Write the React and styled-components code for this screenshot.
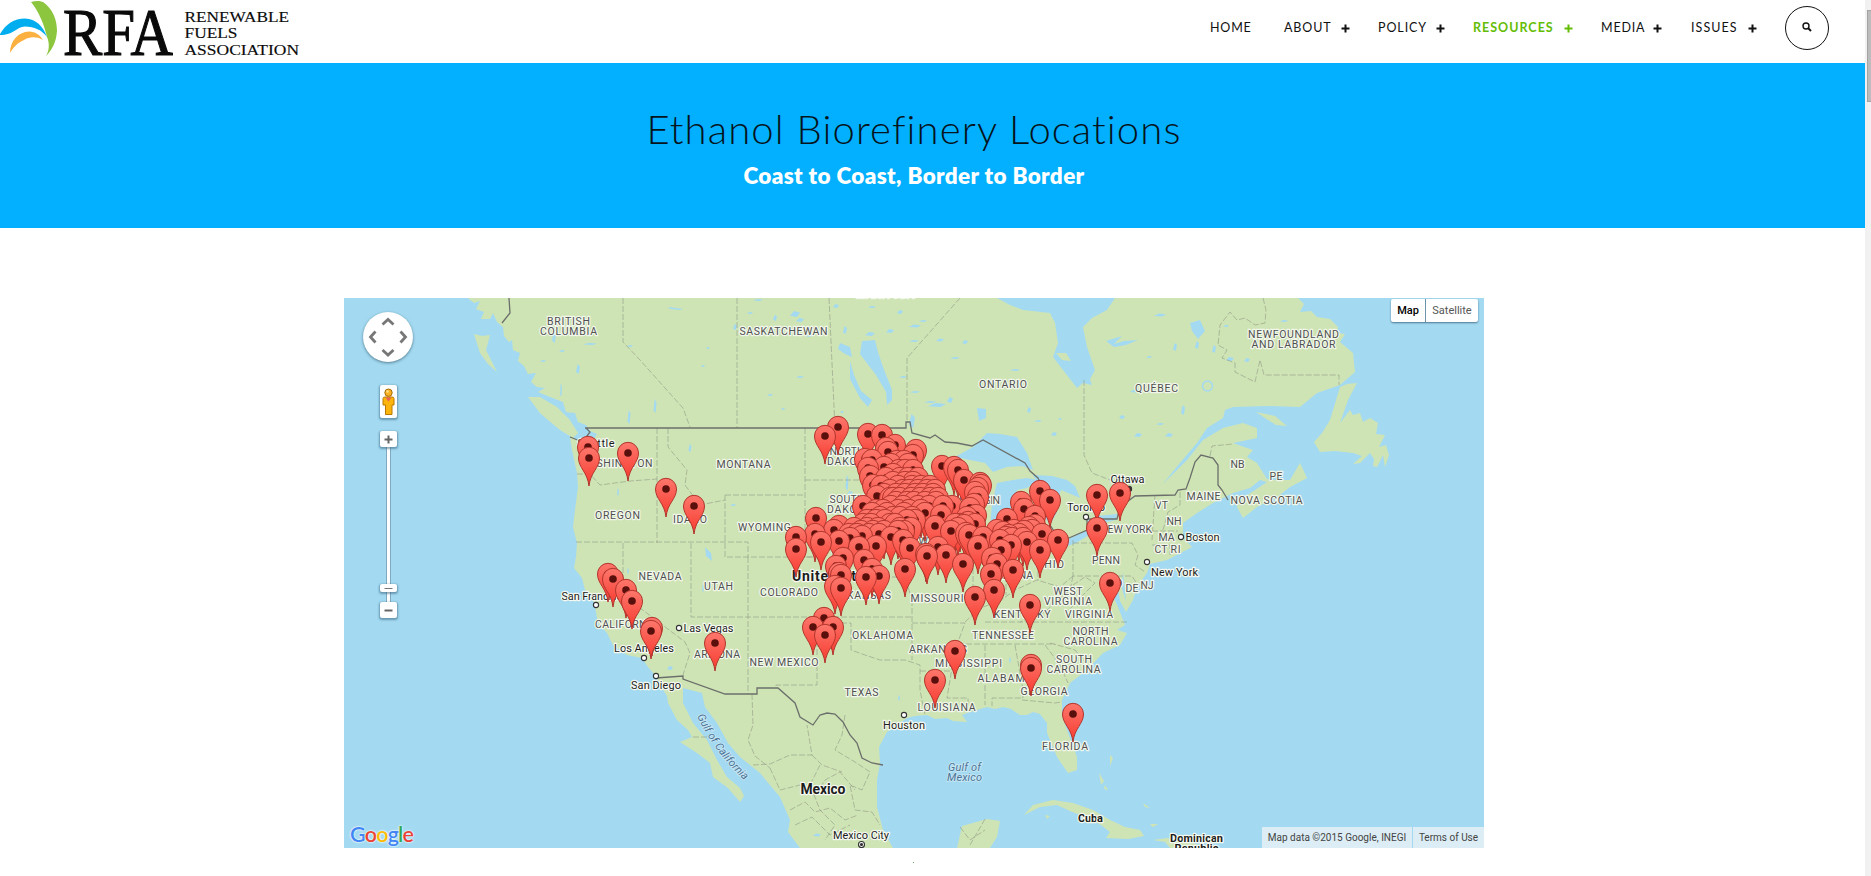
import React from "react";
import styled, { createGlobalStyle } from "styled-components";

const GlobalStyle = createGlobalStyle`
  body { margin: 0; background: #fff; font-family: Lato, "Open Sans", sans-serif; overflow: hidden; }
  * { box-sizing: border-box; }
`;

const Screen = styled.div`
  display: flex;
  width: 1871px;
  height: 876px;
  overflow: hidden;
`;
const Page = styled.div`
  width: 1865px;
  height: 876px;
  display: flex;
  flex-direction: column;
`;
const ScrollTrack = styled.div`
  width: 6px;
  height: 876px;
  padding: 10px 0 0 2px;
  background: #f1f1f1;
`;
const ScrollThumb = styled.div`
  height: 92px;
  background: #bcbcbc;
  border: 1px solid #a3a3a3;
  border-right: 0;
`;
const Header = styled.header`
  display: flex;
  height: 63px;
  justify-content: space-between;
  background: #fff;
`;
const Logo = styled.svg`
  width: 310px;
  height: 63px;
  display: block;
`;
const Nav = styled.nav`
  display: flex;
  align-items: center;
  height: 56px;
  padding-right: 36px;
`;
const NavItem = styled.a`
  display: flex;
  align-items: center;
  width: ${(p) => p.$w}px;
  color: ${(p) => (p.$active ? "#64bd05" : "#111")};
  font-size: 12.5px;
  font-weight: ${(p) => (p.$active ? 700 : 400)};
  line-height: 16px;
  text-decoration: none;
`;
const NavLabel = styled.span`
  width: ${(p) => p.$w}px;
  letter-spacing: ${(p) => p.$ls}px;
  white-space: nowrap;
`;
const Plus = styled.svg`
  width: 9px;
  height: 9px;
  display: block;
`;
const SearchButton = styled.button`
  display: flex;
  align-items: center;
  justify-content: center;
  width: 44px;
  height: 44px;
  padding: 0 0 2px;
  border: 1px solid #111;
  border-radius: 50%;
  background: #fff;
`;
const Hero = styled.section`
  height: 165px;
  padding: 39px 37px 0 0;
  background: #02b0ff;
  text-align: center;
`;
const Title = styled.h1`
  margin: 0;
  font-size: 40px;
  line-height: 54px;
  font-weight: 300;
  letter-spacing: 1.1px;
  color: #06141c;
`;
const Subtitle = styled.h2`
  margin: 8px 0 0;
  font-size: 22.5px;
  line-height: 24px;
  font-weight: 800;
  letter-spacing: 0.35px;
  color: #fff;
`;
const MapBox = styled.main`
  position: relative;
  width: 1140px;
  height: 550px;
  margin: 70px 0 0 344px;
  background: #a3daf1;
  overflow: hidden;
  font-family: Roboto, sans-serif;
`;
const MapCanvas = styled.svg`
  display: block;
  width: 1140px;
  height: 550px;
`;
const Controls = styled.div`
  position: absolute;
  left: 19px;
  top: 14px;
  width: 50px;
  display: flex;
  flex-direction: column;
  align-items: center;
`;
const PanWheel = styled.svg`
  width: 50px;
  height: 50px;
  border-radius: 50%;
  background: #fff;
  box-shadow: 0 1px 3px rgba(30, 60, 80, 0.6);
`;
const ControlButton = styled.div`
  display: flex;
  align-items: center;
  justify-content: center;
  width: 17px;
  height: ${(p) => p.$h}px;
  margin-top: ${(p) => p.$mt || 0}px;
  background: #fff;
  border-radius: 2px;
  box-shadow: 0 1px 2px 1px rgba(50, 90, 120, 0.5);
  z-index: 1;
`;
const Track = styled.div`
  width: 5px;
  height: ${(p) => p.$h}px;
  background: #fff;
  border: solid #7fa9bf;
  border-width: 0 1px;
`;
const TypeSwitch = styled.div`
  position: absolute;
  right: 6px;
  top: 1px;
  display: flex;
  height: 23px;
  background: #fff;
  border-radius: 2px;
  box-shadow: 0 1px 2px rgba(20, 50, 80, 0.6);
  font-size: 11px;
`;
const TypeOption = styled.div`
  width: ${(p) => p.$w}px;
  line-height: 23px;
  text-align: center;
  color: ${(p) => (p.$on ? "#000" : "#565656")};
  font-weight: ${(p) => (p.$on ? 500 : 400)};
  border-left: ${(p) => (p.$on ? "0" : "1px solid #6b93aa")};
`;
const Legal = styled.div`
  position: absolute;
  right: 0;
  bottom: 0;
  display: flex;
  gap: 1px;
`;
const LegalItem = styled.span`
  width: ${(p) => p.$w}px;
  height: 21px;
  line-height: 21px;
  text-align: center;
  white-space: nowrap;
  font-size: 10px;
  letter-spacing: ${(p) => p.$ls}px;
  color: #444;
  background: #dcedf5;
`;
const GoogleMark = styled.div`
  position: absolute;
  left: 6px;
  bottom: 1px;
  font: 600 21.5px/26px Lato, "Open Sans", sans-serif;
  letter-spacing: -0.8px;
  text-shadow: 0 0 2px #fff, 0 0 2px #fff;
`;
const Letter = styled.span`
  color: ${(p) => p.$c};
`;
const Speck = styled.div`
  width: 1px;
  height: 1px;
  margin: 14px 0 0 913px;
  background: #5fae5f;
`;

const LAND = [
  "M468 298 L474 303 480 301 476 309 484 312 481 319 490 319 493 313 497 322 503 327 504 336 509 342 512 340 513 350 520 353 518 361 524 366 528 374 536 373 531 382 537 387 545 388 538 392 550 397 563 402 566 412 575 413 578 422 586 425 590 431 597 434 592 442 587 448 582 441 570 437 572 450 577 473 578 487 575 510 573 527 577 543 576 557 574 568 582 578 585 590 592 595 595 607 598 623 607 633 613 645 627 655 642 658 648 667 655 675 662 688 667 696 668 703 677 720 688 730 692 737 680 742 697 753 710 763 713 777 728 788 740 802 744 796 740 788 727 777 717 760 707 740 693 723 683 703 683 688 702 693 705 707 717 723 728 743 740 757 760 773 780 797 790 820 788 832 800 848 893 848 883 830 877 807 877 780 880 763 879 747 887 732 893 728 907 718 915 716 927 715 935 719 947 718 953 721 967 722 962 715 970 712 987 707 995 709 1003 707 1011 709 1020 715 1027 715 1033 712 1040 714 1047 723 1047 733 1050 740 1057 757 1068 773 1077 770 1077 757 1068 733 1062 715 1062 700 1070 683 1087 670 1103 653 1120 645 1127 633 1117 630 1125 625 1118 607 1110 590 1118 588 1120 601 1126 612 1133 600 1137 587 1147 573 1150 564 1167 560 1192 547 1183 538 1183 523 1197 513 1213 503 1233 493 1250 488 1260 480 1267 482 1240 500 1237 507 1243 518 1257 507 1277 497 1290 487 1307 478 1300 463 1290 480 1275 480 1267 479 1257 463 1247 457 1253 450 1244 447 1233 443 1257 438 1257 428 1243 423 1223 428 1203 440 1187 460 1162 485 1180 463 1197 443 1207 428 1223 418 1225 410 1233 407 1267 406 1300 407 1317 393 1340 385 1355 372 1353 353 1340 342 1345 334 1337 333 1338 327 1330 319 1317 317 1311 311 1300 312 1304 304 1298 298Z",
  "M528 397 L540 397 557 407 570 420 578 433 573 438 560 430 548 420 540 413Z",
  "M474 334 L482 336 490 335 486 350 492 362 497 372 488 364 480 353Z",
  "M1357 383 L1347 384 1340 387 1330 420 1322 433 1314 442 1320 452 1335 451 1353 453 1362 456 1353 464 1360 463 1370 453 1374 459 1373 466 1377 467 1383 455 1385 467 1389 455 1386 445 1379 447 1385 435 1376 434 1378 423 1370 418 1363 422 1360 413 1353 415 1350 410 1340 423 1348 400Z",
  "M1256 412 L1275 416 1287 426 1276 425Z",
  "M1024 815 L1033 805 1053 800 1073 803 1093 810 1110 820 1125 827 1140 830 1144 836 1128 839 1106 838 1110 832 1101 825 1085 817 1070 811 1057 805 1040 807Z",
  "M1045 815 L1050 816 1047 819Z",
  "M1153 840 L1167 838 1190 842 1207 848 1170 848 1165 842Z",
  "M957 848 L962 826 987 819 1000 821 997 837 990 848Z",
  "M1099 773 L1104 781 1101 785Z M1105 785 L1108 790 1104 789Z M1110 755 L1113 758 1110 766Z M1143 803 L1150 808 1145 807Z M1150 824 L1158 824 1153 827Z M1169 814 L1175 817Z",
];
const WATER = [
  "M997 298 L1010 305 1023 310 1050 313 1055 323 1058 343 1053 357 1063 370 1077 388 1083 383 1092 385 1090 379 1095 370 1087 347 1083 327 1092 318 1107 310 1115 298Z",
  "M862 341 L875 340 878 352 883 367 892 390 892 400 887 405 886 392 876 375 866 362 860 354Z",
  "M840 343 L850 347 852 357 845 354 838 349Z M850 361 L854 375 861 391 872 400 868 407 860 398 850 379Z",
  "M955 457 L973 447 987 433 1000 434 1017 437 1027 453 1033 470 1022 466 1007 467 993 472 985 463 970 460Z",
  "M997 483 L1013 480 1027 478 1038 480 1027 488 1017 490 1015 500 1010 512 1008 530 995 537 990 527 992 503Z",
  "M1033 475 L1052 476 1067 480 1075 486 1080 498 1073 495 1061 490 1058 500 1057 512 1050 525 1045 518 1045 500 1040 487Z",
  "M1087 520 L1098 516 1117 514 1116 520 1102 523 1089 523Z",
  "M1045 551 L1066 540 1090 529 1094 532 1076 543 1060 549Z",
  "M977 408 L986 409 986 418 979 421Z",
  "M705 547 L711 553 712 561 706 556Z",
  "M1190 323 L1200 320 1205 331 1198 339 1192 331Z",
  "M1106 341 L1122 336 1114 344 1124 341 1138 340 1126 345 1114 347Z",
  "M668 307 L683 309 680 310 670 309Z",
  "M1123 573 L1121 585 1126 602 1125 590Z",
];
const PONDS = [
  [795,314,5,3],[800,320,4,2],[775,318,2,3],[809,336,3,1],[750,313,3,1],[758,300,5,1],[836,306,3,2],[872,307,4,1],[900,312,3,2],[915,326,6,1.5],[923,321,4,1],[890,331,4,2],[845,330,2,4],[870,334,5,2],[914,341,5,1],[940,340,4,1.5],[965,342,3,2],[903,377,4,1],[915,392,5,1],[930,402,6,1],[937,405,9,2],[950,400,3,3],[800,377,4,1],[770,395,3,1],[783,409,2,1],[842,412,2,1],[1015,370,5,1],[955,358,5,1],[1029,410,2,3],[1038,421,4,1],[1060,419,2,1],[1054,434,3,2],[912,421,3,7],[1135,391,5,1.5],[1160,315,6,1.5],[1175,347,2,4],[1149,357,3,1],[1197,345,2,4],[1183,410,2,5],[1138,435,4,2],[1169,435,4,2],[1122,417,3,2],[1160,424,4,1],[1214,349,2,4],[1230,359,4,2],[1247,360,3,2],[1226,326,3,1],[1284,321,4,1],[735,327,2,3],[708,348,2,1],[703,366,2,1],[630,346,3,1],[554,337,2,6],[562,351,3,1],[578,369,2,5],[561,390,1,7],[629,417,1.5,7],[655,406,1.5,7],[590,344,7,1],[543,361,3,1],[690,448,1.5,4],[618,492,1,4],[733,505,3,1],[847,483,1.5,8],[850,493,3,2],[670,668,3,2],[817,835,4,1.5],[899,698,1,3],[628,571,1,3],[703,588,1,4],[900,638,3,1],[1010,660,1,3],
];
const STATE_LINES =
  "M623 298V342L640 360 665 388 683 408 690 427 M737 298V428 M829 298L835 428 M960 298L907 358V420 M657 428V543 M668 428V447L687 470 685 485 700 505 725 500 M725 495V557H820 M725 495H805 M805 428V557 M805 480H870 M577 474H590L600 485 630 481 657 479 M576 542H748V557 M623 543V595L685 642 690 653 683 675 M691 543V617H912 M748 557V694 M817 617V685H776V688 M817 623H851V650L865 655 880 660 905 660 920 665V690L925 715 M912 600V660 M920 671H952 M912 623H965L955 650 950 680 947 698H968V706 M985 645V705 M1015 645L1023 690V698H992V706 M958 644H1055 M985 622H1127 M1022 700L1055 703 1062 702 M1045 645L1060 665 1068 683 M1050 643L1075 650 1090 668 M1073 540V576H1132L1137 584 M1073 543H1132L1138 555 1135 565 1145 572 M1073 576L1070 590 1058 600 1045 612 1020 622 M1073 585L1085 577 1095 583 1080 598 1070 609 M965 622L980 608 1000 601 1015 590 1037 580 1050 584 1060 587 1073 576 M973 560V600 M1006 560V595 M1038 555V580 M820 557H805 M820 577H905L912 600 M1084 380V455L1092 473 1110 480 1125 490 M1263 298L1266 310 1265 323 1255 325 1245 318 1237 320 1230 312 1220 325 1218 345 1227 350 1222 358 1235 363 1235 372 1255 382 1260 360 1264 375H1339V385 M1155 495L1152 540 M1180 492V505L1168 512 1163 530 M1152 531H1178 M1152 545H1170V555 M1210 456L1212 446 1233 444 M752 694L753 725 748 740 755 756 770 768 M753 765L770 764 790 755 812 755 807 725 M812 755L822 765 842 772 M845 715L842 735 835 750 855 762 870 772 862 790 850 785 855 810 872 812 880 825 M770 768L780 790 800 785 815 795 825 780 840 772 855 790 M790 810L805 802 815 812 830 808 845 820 858 815 M795 825L812 817 830 835 850 825 M820 765L810 785 820 810 835 825 825 840 M985 819L970 845 M693 737H707 M960 827L970 840 985 830";
const NATION_LINES =
  "M585 428H906V422H910L912 433 930 438 935 435 945 442 957 443 972 446 983 440 1025 463 1030 471 1038 478 1048 500 1050 525 1060 540 1069 538 1087 530V519H1117L1120 507 1135 496 1175 495 1178 490 1186 489 1190 478 1195 462 1201 455 1213 458 1218 465V485L1222 490 1228 500 M586 428L590 432 584 440 M570 437L580 441 M656 678L683 676V679L725 694H757V688H778L795 703 800 717 813 725 820 715 827 713 835 714 843 722 850 735 857 743 862 758 872 763 883 765 M509 298L510 313 502 323";

/* text, centre x, baseline, width */
const REGIONS = [
  ["BRITISH",568.5,325,43],["COLUMBIA",568.5,335,57],["SASKATCHEWAN",783.5,335,88],["MANITOBA",885,298,58],["ONTARIO",1003,388,48],["QUÉBEC",1156.5,392,43],
  ["NEWFOUNDLAND",1293.5,338,91],["AND LABRADOR",1293.5,348,84],["WASHINGTON",616,467,73],["MONTANA",743.5,468,54],["NORTH",847,455,35],["DAKOTA",849,465,44],
  ["OREGON",617.5,519,45],["IDAHO",690,523,34],["SOUTH",847,503,35],["DAKOTA",849,513,44],["WYOMING",764.5,531,53],["NEVADA",660,580,43],["UTAH",718.5,590,29],
  ["CALIFORNIA",626,628,62],["ARIZONA",717,658,46],["COLORADO",789,596,58],["KANSAS",869,599,44],["NEW MEXICO",784,666,69],["OKLAHOMA",882.5,639,61],
  ["TEXAS",861.5,696,34],["MISSOURI",937,602,53],["ARKANSAS",938,653,58],["MISSISSIPPI",968.5,667,67],["LOUISIANA",946.5,711,58],["ALABAMA",1005,682,55],
  ["TENNESSEE",1003,639,62],["KENTUCKY",1022,618,57],["GEORGIA",1044,695,47],["FLORIDA",1065,750,46],["WEST",1068,595,29],["VIRGINIA",1068,605,48],["VIRGINIA",1089,618,48],
  ["NORTH",1090.5,635,36],["CAROLINA",1090.5,645,54],["SOUTH",1074,663,36],["CAROLINA",1073.5,673,54],["INDIANA",1013,579,40],["OHIO",1050,568,28],["PENN",1106,564,28],
  ["NEW YORK",1126,533,52],["VT",1161.5,509,13],["NH",1174,525,15],["MA",1166.5,541,16],["CT",1161,553,13],["RI",1175.5,553,10],["MAINE",1203.5,500,34],["NB",1237.5,468,14],
  ["PE",1276,480,13],["NOVA SCOTIA",1266.5,504,72],["MD",1115,587,15],["DE",1132,592,13],["NJ",1147,589,13],["WISCONSIN",974,504,52],["NEBRASKA",860,553,56],["IOWA",921,545,28],
];
const CITIES = [
  ["Seattle",596,447,37],["San Francisco",595,600,67],["Los Angeles",644,652,60],["San Diego",656,689,50],["Las Vegas",708.5,632,50],["Houston",904,729,42],["Mexico City",861,839,56],
  ["Toronto",1086,511,38],["Ottawa",1127.5,483,34],["Boston",1202.5,541,34],["New York",1174.5,576,47],
];
const TOWNS = [[596,605],[644,658],[656,676],[679,628],[904,715],[1086,517],[1181,537],[1147,562]];

const SPREAD = {
  461:[897,904],464:[891,908],470:[899,905,913],474:[893],478:[886,900,908,918],482:[893,905,913],486:[881,898,912,921,930],490:[890,903,909,918,927,935],
  494:[884,896,905,915,923,933],498:[890,893,900,911,920,930,938],502:[896,907,914,925,936],506:[891,903,918,929,943],510:[876,883,898,909,921],
  513:[872,887,904],517:[880,893,900,912],520:[867,876,885,907],524:[863,871,890,895,960,955,975],528:[854,867,878,900,911,958],531:[861,873,884,898],534:[849,857,869,879],
};
const SINGLE = [
  [588,447],[589,458],[628,453],[666,489],[694,506],[608,574],[613,579],[626,590],[632,601],[652,628],[651,631],[715,643],
  [905,569],[926,554],[927,556],[946,555],[963,564],[997,564],[991,574],[1013,570],[994,590],[975,597],[1030,605],[1110,583],[955,651],[1031,665],[1031,668],[935,680],[1073,714],
  [824,618],[813,627],[833,627],[825,635],[796,549],[821,542],[839,541],[859,547],[876,546],[843,558],[836,566],[864,560],[839,573],[841,575],[835,586],[841,588],[872,569],[866,577],[879,576],
  [910,548],[1040,550],[978,546],[1001,550],[1011,545],[1027,542],[1058,540],[938,547],[992,558],[838,427],[825,436],[868,434],[882,435],[895,445],[886,448],[888,452],[916,450],[913,455],
  [865,459],[872,460],[868,468],[884,467],[870,476],[873,485],[877,496],[863,506],[942,466],[954,467],[958,470],[964,480],[980,483],[978,488],[975,492],[978,497],[974,504],[981,485],
  [952,506],[941,515],[935,526],[951,531],[925,513],[816,518],[815,534],[796,537],[834,530],[839,526],[862,536],[891,537],[903,540],[969,535],[983,537],[966,533],[1042,534],
  [1007,519],[1021,502],[1024,509],[1040,491],[1050,500],[1035,516],[1097,495],[1120,493],[1097,528],[976,515],[964,525],[967,517],[915,520],[904,531],[1000,540],[970,508],
  [997,530],[1003,532],[1009,535],[1014,530],[1019,534],[1024,531],[1029,527],[1035,525],[1032,530],[1012,538],[1006,537],[1023,538],[850,538],[968,522],
];
const PINS = [...SINGLE, ...Object.entries(SPREAD).flatMap(([y, xs]) => xs.map((x) => [x, +y]))].sort((a, b) => a[1] - b[1]);

const NAV = [
  { label: "HOME", w: 74, slot: 57, ls: 0.8, leaf: true },
  { label: "ABOUT", w: 94, slot: 57, ls: 0.9 },
  { label: "POLICY", w: 95, slot: 58, ls: 0.9 },
  { label: "RESOURCES", w: 128, slot: 91, ls: 1, active: true },
  { label: "MEDIA", w: 90, slot: 52, ls: 0.8 },
  { label: "ISSUES", w: 94, slot: 57, ls: 1.05 },
];

function BrandLogo() {
  return (
    <Logo viewBox="0 0 310 63" role="img">
      <path d="M31 2C35 .5 40 .5 43 2C53 9 57 20 57 31C56 43 52 50 46 56C49 51 50 44 47 37C44 24 39 12 31 2Z" fill="#8cc63f" />
      <path d="M0 34C6 24 14 18.500 25 18.500C36 19 43 26 47 37C42 30 34 26.500 25 26.500C16 27 14 35 0 35Z" fill="#00aeef" />
      <path d="M10 53C10 41 18 32 29 31.500C35 31.500 40 35 43 40C36 36 29 37 24 40C17 43 14 47 10 53Z" fill="#fbb040" />
      <g fontFamily="'Liberation Serif', serif" fill="#0a0a0a" stroke="#0a0a0a">
        <text x="63" y="54.5" fontSize="68" strokeWidth="1.2" textLength="110" lengthAdjust="spacingAndGlyphs">RFA</text>
        <g fontSize="15.5" strokeWidth=".15">
          <text x="184.5" y="21.5" textLength="104.5" lengthAdjust="spacingAndGlyphs">RENEWABLE</text>
          <text x="184.5" y="38" textLength="53" lengthAdjust="spacingAndGlyphs">FUELS</text>
          <text x="184.5" y="55" textLength="114.5" lengthAdjust="spacingAndGlyphs">ASSOCIATION</text>
        </g>
      </g>
    </Logo>
  );
}

function PlusIcon() {
  return (
    <Plus viewBox="0 0 9 9">
      <path d="M4.5 .5V8.5M.5 4.5H8.5" stroke="currentColor" strokeWidth="2" />
    </Plus>
  );
}

function LocationMap() {
  return (
    <MapCanvas viewBox="344 298 1140 550">
      <defs>
        <linearGradient id="pinFill" x1="0" y1="0" x2="0" y2="1">
          <stop offset="0" stopColor="#fd776c" />
          <stop offset="1" stopColor="#f7392e" />
        </linearGradient>
        <g id="pin">
          <path d="M0 28C-1.5 14-10.5 10-10.5 0A10.5 10.7 0 0 1 10.5 0C10.5 10 1.5 14 0 28Z" fill="url(#pinFill)" stroke="#b2352d" strokeWidth="1" />
          <circle r="3.8" fill="#590f0c" />
        </g>
        <path id="gulfPath" d="M697 716Q714 752 747 783" />
      </defs>
      <g fill="#cfe4b5">{LAND.map((d) => <path key={d} d={d} />)}</g>
      <g fill="#a3daf1">
        {WATER.map((d) => <path key={d} d={d} />)}
        {PONDS.map(([x, y, rx, ry]) => (
          <path key={`${x}-${y}`} d={`M${x - rx} ${y + ry * 0.6}L${x - rx * 0.2} ${y - ry}L${x + rx} ${y - ry * 0.5}L${x + rx * 0.4} ${y + ry}Z`} />
        ))}
      </g>
      <circle cx="1207.500" cy="386" r="5" fill="none" stroke="#a3daf1" strokeWidth="1.5" />
      <path d="M1056 353L1066 353 1071 361 1062 360Z" fill="#cfe4b5" />
      <path d={STATE_LINES} fill="none" stroke="#8f9a86" strokeOpacity=".6" strokeWidth="1" strokeDasharray="6 2" />
      <path d={NATION_LINES} fill="none" stroke="#6b6f6b" strokeWidth="1.3" />
      <g fontSize="10.5" textAnchor="middle" fill="#505050" stroke="#f2f7ec" strokeWidth="2.4" strokeLinejoin="round" paintOrder="stroke">
        {REGIONS.map(([t, x, y, w], i) => (
          <text key={i} x={x} y={y} textLength={w}>{t}</text>
        ))}
      </g>
      <g textAnchor="middle" fill="#1c1c1c" stroke="#f4f8f0" strokeWidth="2.4" strokeLinejoin="round" paintOrder="stroke">
        {CITIES.map(([t, x, y, w]) => (
          <text key={t} x={x} y={y} fontSize="11" textLength={w}>{t}</text>
        ))}
        <g fontWeight="700">
          <text x="839" y="581" fontSize="14" textLength="94">United States</text>
          <text x="823" y="794" fontSize="14" textLength="45">Mexico</text>
          <text x="1090.500" y="822" fontSize="11" textLength="25">Cuba</text>
          <text x="1196.500" y="842" fontSize="11" textLength="53">Dominican</text>
          <text x="1196.500" y="852" fontSize="11" textLength="44">Republic</text>
        </g>
      </g>
      <g fill="#4d7396" fontStyle="italic" fontSize="11" stroke="#c9e8f5" strokeWidth="1.6" paintOrder="stroke">
        <text x="964.500" y="771" textAnchor="middle" textLength="33">Gulf of</text>
        <text x="964.500" y="781" textAnchor="middle" textLength="35">Mexico</text>
        <text><textPath href="#gulfPath">Gulf of California</textPath></text>
      </g>
      <g fill="#fff" stroke="#333" strokeWidth="1.1">
        {TOWNS.map(([x, y]) => <circle key={x} cx={x} cy={y} r="2.6" />)}
        <circle cx="861.500" cy="844.500" r="3" />
        <circle cx="861.500" cy="844.500" r="1" fill="#333" />
        <circle cx="1129" cy="489" r="2.600" fill="#333" />
      </g>
      {PINS.map(([x, y], i) => <use key={i} href="#pin" x={x} y={y} />)}
    </MapCanvas>
  );
}

function MapControls() {
  return (
    <Controls>
      <PanWheel viewBox="0 0 50 50">
        <path d="M19.500 12.500L25 7.500L30.500 12.500M19.500 38L25 43L30.500 38M12.500 19.500L7.500 25L12.500 30.500M37.500 19.500L42.500 25L37.500 30.500" fill="none" stroke="#777" strokeWidth="2.800" />
      </PanWheel>
      <ControlButton $h={33} $mt={23}>
        <svg width="13" height="28" viewBox="0 0 13 28">
          <path d="M1 10.500Q1 9 3 9H10Q12 9 12 10.500V17H10V26.500H3.500V17H1Z" fill="#fbb40b" stroke="#bb7800" />
          <path d="M3.500 9.500H9.500L6.500 13.500Z" fill="#e8605a" />
          <circle cx="6.500" cy="4.700" r="3.700" fill="#f9b021" stroke="#a86b08" />
          <circle cx="5.500" cy="3.500" r="1.300" fill="#ffdf83" />
        </svg>
      </ControlButton>
      <ControlButton $h={16} $mt={13}>
        <svg width="9" height="9"><path d="M4.500 .5V8.500M.5 4.500H8.500" stroke="#666" strokeWidth="2" /></svg>
      </ControlButton>
      <Track $h={137} />
      <ControlButton $h={8}>
        <svg width="9" height="3"><path d="M.5 1.500H8.500" stroke="#777" /></svg>
      </ControlButton>
      <Track $h={10} />
      <ControlButton $h={16}>
        <svg width="9" height="3"><path d="M.5 1.500H8.500" stroke="#666" strokeWidth="2" /></svg>
      </ControlButton>
    </Controls>
  );
}

const GOOGLE = [["G", "#4285f4"], ["o", "#ea4335"], ["o", "#fbbc05"], ["g", "#4285f4"], ["l", "#34a853"], ["e", "#ea4335"]];

export default function App() {
  return (
    <Screen>
      <GlobalStyle />
      <Page>
        <Header>
          <BrandLogo />
          <Nav>
            {NAV.map((n) => (
              <NavItem key={n.label} $w={n.w} $active={n.active}>
                <NavLabel $w={n.slot} $ls={n.ls}>{n.label}</NavLabel>
                {!n.leaf && <PlusIcon />}
              </NavItem>
            ))}
            <SearchButton aria-label="Search">
              <svg width="10" height="10" viewBox="0 0 10 10">
                <circle cx="4" cy="4" r="3" fill="none" stroke="#111" strokeWidth="1.400" />
                <path d="M6 6L9 9" stroke="#111" strokeWidth="2" />
              </svg>
            </SearchButton>
          </Nav>
        </Header>
        <Hero>
          <Title>Ethanol Biorefinery Locations</Title>
          <Subtitle>Coast to Coast, Border to Border</Subtitle>
        </Hero>
        <MapBox>
          <LocationMap />
          <MapControls />
          <TypeSwitch>
            <TypeOption $w={34} $on>Map</TypeOption>
            <TypeOption $w={53}>Satellite</TypeOption>
          </TypeSwitch>
          <GoogleMark>{GOOGLE.map(([ch, c], i) => <Letter key={i} $c={c}>{ch}</Letter>)}</GoogleMark>
          <Legal>
            <LegalItem $w={150} $ls={0}>Map data ©2015 Google, INEGI</LegalItem>
            <LegalItem $w={71} $ls={0}>Terms of Use</LegalItem>
          </Legal>
        </MapBox>
        <Speck />
      </Page>
      <ScrollTrack>
        <ScrollThumb />
      </ScrollTrack>
    </Screen>
  );
}
